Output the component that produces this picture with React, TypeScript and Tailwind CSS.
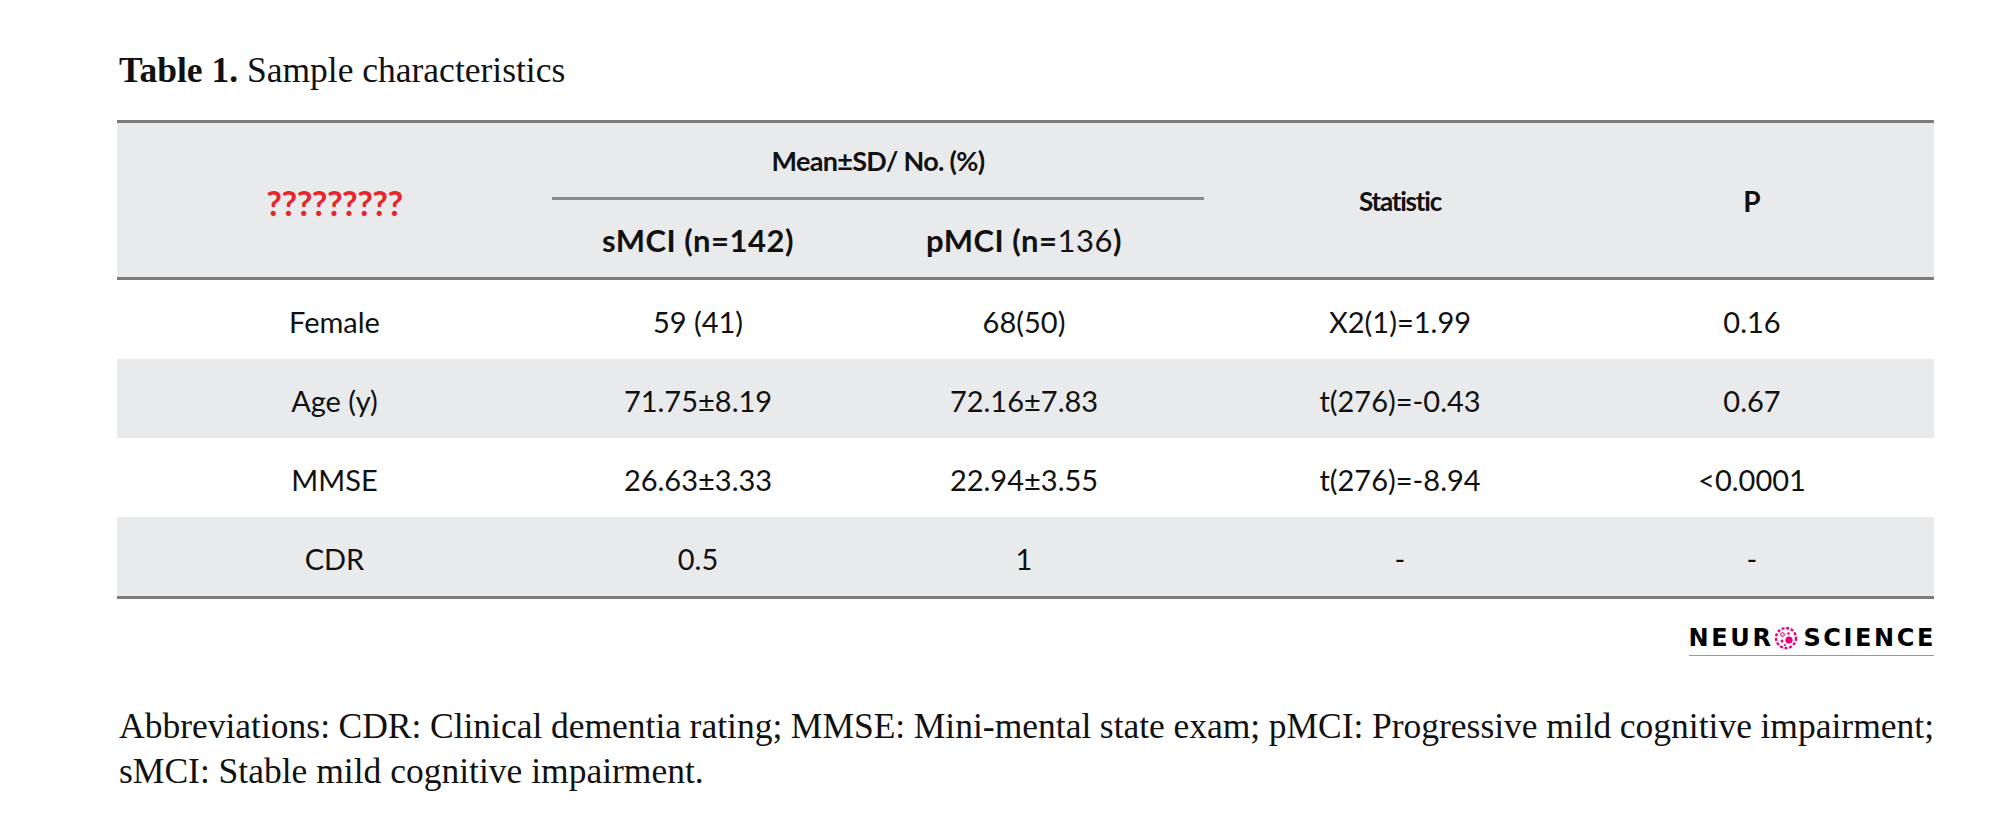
import React from "react";

type Row = {
  label: string;
  s: string;
  p: string;
  stat: string;
  pv: string;
};

const rows: Row[] = [
  { label: "Female", s: "59 (41)", p: "68(50)", stat: "X2(1)=1.99", pv: "0.16" },
  { label: "Age (y)", s: "71.75±8.19", p: "72.16±7.83", stat: "t(276)=-0.43", pv: "0.67" },
  { label: "MMSE", s: "26.63±3.33", p: "22.94±3.55", stat: "t(276)=-8.94", pv: "<0.0001" },
  { label: "CDR", s: "0.5", p: "1", stat: "-", pv: "-" },
];

const NeuronDot: React.FC = () => (
  <svg width="24" height="24" viewBox="0 0 24 24" className="ml-[1px] mr-[5px]">
    <circle cx="12" cy="12" r="10" fill="none" stroke="#e6007e" strokeWidth="2.4" strokeDasharray="3 1.7" />
    <circle cx="8.5" cy="8.5" r="1.8" fill="none" stroke="#e6007e" strokeWidth="1.1" />
    <circle cx="14.5" cy="7.5" r="1.3" fill="#e6007e" />
    <circle cx="15" cy="14" r="3.6" fill="#e6007e" />
    <circle cx="8" cy="15" r="1.5" fill="#e6007e" />
    <circle cx="11" cy="19" r="1.1" fill="#e6007e" />
  </svg>
);

const App: React.FC = () => {
  return (
    <div className="w-[2000px] h-[824px] bg-white pl-[117px] pt-[50px] text-[#111]">
      <div className="w-[1817px]">
        <h1 className="h-[40px] leading-[40px] pl-[2px] text-[35.5px] font-['Liberation_Serif',serif]">
          <span className="font-bold">Table 1.</span> Sample characteristics
        </h1>

        <div className="mt-[30px] font-['Lato',sans-serif]">
          <div className="grid grid-cols-[435px_292px_360px_392px_338px] grid-rows-[77px_77px] bg-[#e9eaec] border-t-[3px] border-b-[3px] border-[#7c7c7c] font-bold">
            <div className="row-span-2 col-start-1 row-start-1 flex items-center justify-center pt-[4px] text-[34px] tracking-[-0.5px] text-[#e6262a]">
              ?????????
            </div>
            <div className="col-span-2 col-start-2 row-start-1 flex items-center justify-center pt-[2px] border-b-[3px] border-[#8a8a8a] text-[27px] tracking-[-0.7px]">
              Mean±SD/ No. (%)
            </div>
            <div className="row-span-2 col-start-4 row-start-1 flex items-center justify-center pt-[2px] text-[26px] tracking-[-1.2px]">
              Statistic
            </div>
            <div className="row-span-2 col-start-5 row-start-1 flex items-center justify-center pt-[2px] pr-[26px] text-[28px]">
              P
            </div>
            <div className="col-start-2 row-start-2 flex items-center justify-center pt-[4px] text-[31px] tracking-[0.5px]">
              sMCI (n=142)
            </div>
            <div className="col-start-3 row-start-2 flex items-center justify-center pt-[4px] text-[31px] tracking-[0.5px]">
              pMCI (n=<span className="font-normal">136</span>)
            </div>
          </div>

          <div className="border-b-[3px] border-[#7c7c7c] text-[29px]">
            {rows.map((r, i) => (
              <div
                key={r.label}
                className={`grid grid-cols-[435px_292px_360px_392px_338px] h-[79px] items-center pt-[4px] text-center ${
                  i % 2 === 1 ? "bg-[#e9eaec]" : "bg-white"
                }`}
              >
                <div>{r.label}</div>
                <div>{r.s}</div>
                <div>{r.p}</div>
                <div>{r.stat}</div>
                <div className="pr-[26px]">{r.pv}</div>
              </div>
            ))}
          </div>
        </div>

        <div className="mt-[26px] flex justify-end">
          <div className="flex items-center h-[31px] border-b border-[#9a9a9a] pb-[4px] font-['DejaVu_Sans',sans-serif] font-bold text-[24px] tracking-[2.6px] text-black">
            <span>NEUR</span>
            <NeuronDot />
            <span className="mr-[-2px]">SCIENCE</span>
          </div>
        </div>

        <div className="mt-[48px] font-['Liberation_Serif',serif] text-[35.5px] leading-[45px] pl-[2px]">
          <p className="text-justify [text-align-last:justify] [word-spacing:-6px] whitespace-nowrap">
            Abbreviations: CDR: Clinical dementia rating; MMSE: Mini-mental state exam; pMCI: Progressive mild cognitive impairment;
          </p>
          <p>sMCI: Stable mild cognitive impairment.</p>
        </div>
      </div>
    </div>
  );
};

export default App;
